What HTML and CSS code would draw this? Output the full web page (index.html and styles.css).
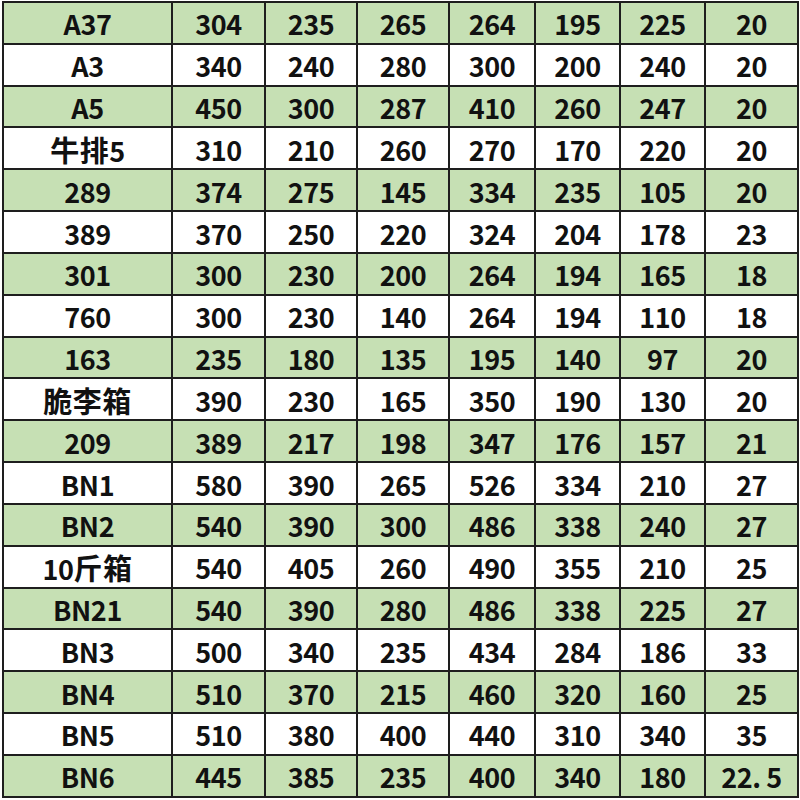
FILE: index.html
```html
<!DOCTYPE html>
<html>
<head>
<meta charset="utf-8">
<link rel="stylesheet" href="styles.css">
</head>
<body>
<table class="grid">
<colgroup>
<col class="c1"><col class="c2"><col class="c3"><col class="c4"><col class="c5"><col class="c6"><col class="c7"><col class="c8">
</colgroup>
<tbody>
<tr class="g"><td>A37</td><td>304</td><td>235</td><td>265</td><td>264</td><td>195</td><td>225</td><td>20</td></tr>
<tr><td>A3</td><td>340</td><td>240</td><td>280</td><td>300</td><td>200</td><td>240</td><td>20</td></tr>
<tr class="g"><td>A5</td><td>450</td><td>300</td><td>287</td><td>410</td><td>260</td><td>247</td><td>20</td></tr>
<tr><td><span class="zh">牛排</span>5</td><td>310</td><td>210</td><td>260</td><td>270</td><td>170</td><td>220</td><td>20</td></tr>
<tr class="g"><td>289</td><td>374</td><td>275</td><td>145</td><td>334</td><td>235</td><td>105</td><td>20</td></tr>
<tr><td>389</td><td>370</td><td>250</td><td>220</td><td>324</td><td>204</td><td>178</td><td>23</td></tr>
<tr class="g"><td>301</td><td>300</td><td>230</td><td>200</td><td>264</td><td>194</td><td>165</td><td>18</td></tr>
<tr><td>760</td><td>300</td><td>230</td><td>140</td><td>264</td><td>194</td><td>110</td><td>18</td></tr>
<tr class="g"><td>163</td><td>235</td><td>180</td><td>135</td><td>195</td><td>140</td><td>97</td><td>20</td></tr>
<tr><td><span class="zh">脆李箱</span></td><td>390</td><td>230</td><td>165</td><td>350</td><td>190</td><td>130</td><td>20</td></tr>
<tr class="g"><td>209</td><td>389</td><td>217</td><td>198</td><td>347</td><td>176</td><td>157</td><td>21</td></tr>
<tr><td>BN1</td><td>580</td><td>390</td><td>265</td><td>526</td><td>334</td><td>210</td><td>27</td></tr>
<tr class="g"><td>BN2</td><td>540</td><td>390</td><td>300</td><td>486</td><td>338</td><td>240</td><td>27</td></tr>
<tr><td>10<span class="zh">斤箱</span></td><td>540</td><td>405</td><td>260</td><td>490</td><td>355</td><td>210</td><td>25</td></tr>
<tr class="g"><td>BN21</td><td>540</td><td>390</td><td>280</td><td>486</td><td>338</td><td>225</td><td>27</td></tr>
<tr><td>BN3</td><td>500</td><td>340</td><td>235</td><td>434</td><td>284</td><td>186</td><td>33</td></tr>
<tr class="g"><td>BN4</td><td>510</td><td>370</td><td>215</td><td>460</td><td>320</td><td>160</td><td>25</td></tr>
<tr><td>BN5</td><td>510</td><td>380</td><td>400</td><td>440</td><td>310</td><td>340</td><td>35</td></tr>
<tr class="g"><td>BN6</td><td>445</td><td>385</td><td>235</td><td>400</td><td>340</td><td>180</td><td>22. 5</td></tr>
</tbody>
</table>
</body>
</html>
```

FILE: styles.css
```css
html, body {
  margin: 0;
  padding: 0;
  background: #ffffff;
}
.grid {
  margin: 1px 0 0 2px;
  width: 797px;
  border-collapse: collapse;
  table-layout: fixed;
  font-family: "Noto Sans CJK SC", "DejaVu Sans", sans-serif;
  font-weight: 700;
  font-size: 27px;
  letter-spacing: -0.4px;
  color: #111;
}
.c1 { width: 169px; }
.c2 { width: 93px; }
.c3 { width: 92px; }
.c4 { width: 92px; }
.c5 { width: 86px; }
.c6 { width: 85px; }
.c7 { width: 85px; }
.c8 { width: 93px; }
.grid tr {
  height: 41.84px;
}
.grid td {
  border: 2px solid #1e1e1e;
  padding: 2px 0 0;
  text-align: center;
  vertical-align: middle;
  line-height: 1;
  white-space: nowrap;
}
.grid tr.g td {
  background: #c6e0b4;
}
.zh {
  font-size: 29px;
  letter-spacing: 0.5px;
}
```
